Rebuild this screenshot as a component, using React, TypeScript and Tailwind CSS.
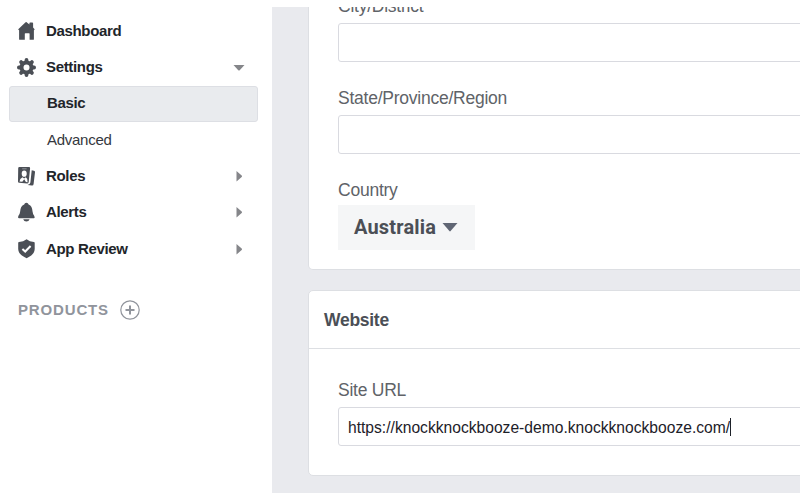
import type { ReactNode } from "react";

const icon = "h-[20px] w-[20px] shrink-0";

function HomeIcon() {
  return (
    <svg className={icon} viewBox="0 0 20 20" fill="#4b4f56">
      <path d="M10.3 1.1 13.4 3.6V2.3Q13.4 1.5 14.2 1.5H16.3Q17.1 1.5 17.1 2.3V6.6L18.4 8Q19 9 17.9 9.2V18.2Q17.9 18.8 17.2 18.8H13.6V12.8Q13.6 12.2 13 12.2H9.4Q8.8 12.2 8.8 12.8V18.8H3.8Q3.1 18.8 3.1 18.2V9.2Q1.7 9 2.5 8L9.3 1.4Q9.9.8 10.3 1.1Z" />
    </svg>
  );
}

function GearIcon() {
  return (
    <svg className={icon} viewBox="0 0 20 20" fill="none" stroke="#4b4f56">
      <circle cx="10.5" cy="10.5" r="5" strokeWidth="4" />
      <g strokeWidth="3.8" strokeLinecap="round">
        <path d="M10.5 2.9V4.6M10.5 16.4V18.1M2.9 10.5H4.6M16.4 10.5H18.1" />
        <path d="M5.1 5.1 6.3 6.3M14.7 14.7 15.9 15.9M15.9 5.1 14.7 6.3M6.3 14.7 5.1 15.9" />
      </g>
    </svg>
  );
}

function RolesIcon() {
  return (
    <svg className={icon} viewBox="0 0 20 20">
      <path d="M3.4 1H13Q14.2 1 14.1 2.2L12.7 16Q12.5 17.5 11.3 17.4L3.2 16.8Q2 16.7 2 15.5L2.2 2.2Q2.2 1 3.4 1Z" fill="#4b4f56" />
      <path d="M6.2 2.8H10.6" stroke="#a5a8ad" strokeWidth="0.8" />
      <ellipse cx="8.2" cy="7.7" rx="2.5" ry="3.1" fill="#fff" />
      <path d="M3.5 15.6Q3.7 12.3 6.5 11.2L8.1 12.4 9.8 11.3Q11.8 12.5 11.6 16.2L9.9 16.1 8.2 13.3 6.3 15.8Z" fill="#fff" />
      <path d="M15.7 4.2 18 4.7Q19.2 5 19 6.2L17.6 18Q17.4 19.7 15.8 19.5L11.6 18.9Q14.2 18.5 14.4 16.5Z" fill="#4b4f56" />
    </svg>
  );
}

function BellIcon() {
  return (
    <svg className={icon} viewBox="0 0 20 20" fill="#4b4f56">
      <path d="M10.4.8Q12.2.8 12.6 2.6C15.3 3.5 16.2 6 16.5 9.3Q16.8 12.5 18.3 14Q19.2 16.2 18 16.3H3Q1.5 16.2 2.3 14Q3.9 12.5 4.2 9.3C4.5 6 5.5 3.5 8.2 2.6Q8.6.8 10.4.8Z" />
      <path d="M7.2 17.3H13.6Q12.7 19.5 10.4 19.5Q8 19.5 7.2 17.3Z" />
    </svg>
  );
}

function ShieldIcon() {
  return (
    <svg className={icon} viewBox="0 0 20 20">
      <path d="M10.6.2Q13.6 2.7 17.9 3Q18.7 3.1 18.7 3.9V10C18.7 14.4 15 17.3 10.6 19.2C6.2 17.3 2.2 14.4 2.2 10V3.9Q2.2 3.1 3 3Q7.4 2.7 10.6.2Z" fill="#4b4f56" />
      <path d="M6.4 9.9 9.2 12.5 14.6 7" fill="none" stroke="#fff" strokeWidth="2" />
    </svg>
  );
}

function Arrow({ down }: { down?: boolean }) {
  return (
    <svg className="ml-auto h-[12px] w-[12px]" viewBox="0 0 12 12" fill="#85868a">
      {down ? <path d="M.5 4.1H11.5L6.7 9.3Q6 9.9 5.3 9.3Z" /> : <path d="M3.5 1.1 8.7 5.6Q9.5 6.3 8.7 7L3.5 11.6Z" />}
    </svg>
  );
}

function NavRow({ glyph, label, arrow }: { glyph: ReactNode; label: string; arrow?: "down" | "right" }) {
  return (
    <div className="flex h-[36.3px] items-center pr-[27px] pl-[16px]">
      {glyph}
      <span className="ml-[10px] pt-px text-[15px] font-bold tracking-[-0.34px] text-[#22252a]">{label}</span>
      {arrow && <Arrow down={arrow === "down"} />}
    </div>
  );
}

const fieldLabel = "text-[17.5px] leading-[20px] tracking-[-0.24px] text-[#606368]";

function TextField({ label, value }: { label: string; value?: string }) {
  return (
    <div>
      <div className={`h-[27px] ${fieldLabel}`}>{label}</div>
      <div className="flex h-[39px] w-[500px] items-center rounded-[3px] border border-[#d9dae0] bg-white pl-[9px] text-[15.63px] text-[#1d2129]">
        {value && (
          <>
            <span className="pt-[2px]">{value}</span>
            <span className="h-[18px] w-px bg-[#1d2129]" />
          </>
        )}
      </div>
    </div>
  );
}

export default function App() {
  return (
    <div className="h-[500px] w-[800px] overflow-hidden bg-white py-[7px] font-['Liberation_Sans',sans-serif]">
      <div className="flex h-[486px]">
        <nav className="w-[272px] shrink-0 pt-[5.6px]">
          <NavRow glyph={<HomeIcon />} label="Dashboard" />
          <NavRow glyph={<GearIcon />} label="Settings" arrow="down" />
          <div className="mt-[0.5px] mb-[-0.2px] ml-[8.5px] flex h-[36px] w-[249px] items-center rounded-[3px] border border-[#dddfe4] bg-[#e9ebee] pl-[37.5px] text-[15px] font-bold tracking-[-0.34px] text-[#22252a]">
            Basic
          </div>
          <div className="flex h-[36.3px] items-center pt-px pl-[47px] text-[15px] tracking-[-0.27px] text-[#35383e]">Advanced</div>
          <NavRow glyph={<RolesIcon />} label="Roles" arrow="right" />
          <NavRow glyph={<BellIcon />} label="Alerts" arrow="right" />
          <NavRow glyph={<ShieldIcon />} label="App Review" arrow="right" />
          <div className="mt-[32.2px] flex items-center pl-[18px]">
            <span className="text-[15px] font-bold tracking-[0.85px] text-[#90949c]">PRODUCTS</span>
            <svg className="ml-[11.3px] h-[20px] w-[20px]" viewBox="0 0 20 20" fill="none" stroke="#90949c">
              <circle cx="10" cy="10" r="9.2" strokeWidth="1.2" />
              <path d="M10 5.5V14.5M5.5 10H14.5" strokeWidth="2" />
            </svg>
          </div>
        </nav>

        <main className="flex w-[528px] flex-col gap-[20px] overflow-hidden bg-[#e9eaee] pl-[36px]">
          <section className="h-[263px] w-[540px] shrink-0 rounded-b-[5px] border border-t-0 border-[#dddfe3] bg-white pl-[29px]">
            <div className="mt-[-11px] flex flex-col gap-[26px]">
              <TextField label="City/District" />
              <TextField label="State/Province/Region" />
              <div>
                <div className={`h-[25px] ${fieldLabel}`}>Country</div>
                <div className="flex h-[45px] w-[137px] items-center bg-[#f5f6f7] pl-[16px] font-['Roboto',sans-serif] text-[20px] font-bold tracking-[0.17px] text-[#4b4f56]">
                  <span className="mt-[-2px]">Australia</span>
                  <svg className="ml-[6px] h-[9px] w-[16px]" viewBox="0 0 16 9" fill="#606674">
                    <path d="M.5 0H15.5L8.6 8.1Q8 8.8 7.4 8.1Z" />
                  </svg>
                </div>
              </div>
            </div>
          </section>
          <section className="h-[186px] w-[540px] shrink-0 rounded-[5px] border border-[#dddfe3] bg-white">
            <h2 className="flex h-[58px] items-center border-b border-[#dddfe3] pt-px pl-[15px] text-[17.5px] font-bold tracking-[-0.27px] text-[#4b4f56]">
              Website
            </h2>
            <div className="pt-[31px] pl-[29px]">
              <TextField label="Site URL" value="https://knockknockbooze-demo.knockknockbooze.com/" />
            </div>
          </section>
        </main>
      </div>
    </div>
  );
}
